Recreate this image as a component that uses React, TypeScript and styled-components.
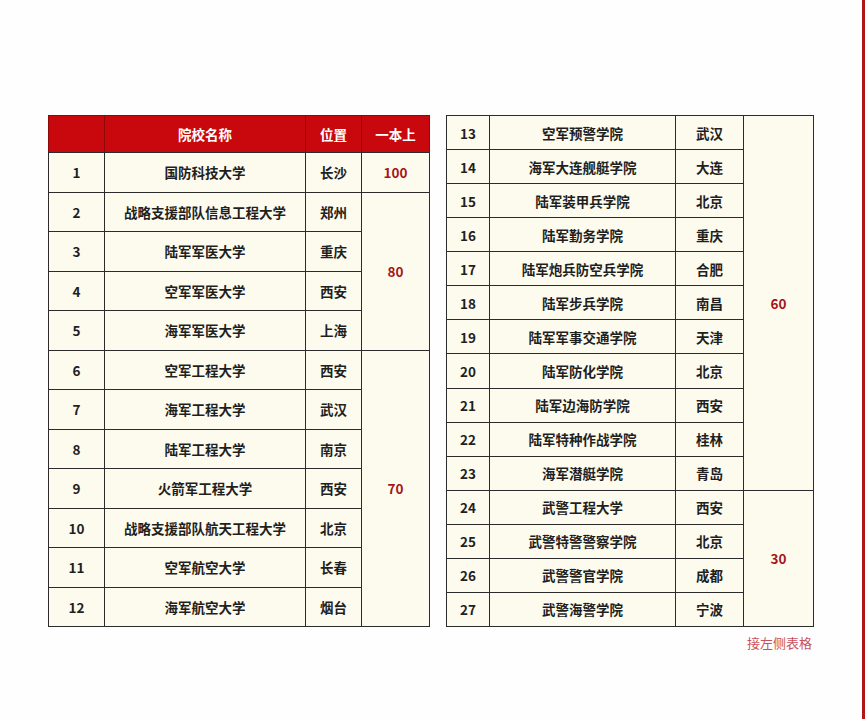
import React from "react";
import styled, { createGlobalStyle } from "styled-components";

const GlobalStyle = createGlobalStyle`
  html, body { margin: 0; padding: 0; background: #fefefe; }
  body { font-family: "Noto Sans CJK SC", "Noto Sans", sans-serif; }
`;

const Page = styled.div`
  width: 865px;
  height: 719px;
  box-sizing: border-box;
  border-right: 3px solid #b3141c;
  padding: 115px 0 0 48px;
  display: flex;
  gap: 16px;
  align-items: flex-start;
`;

const Column = styled.div`
  display: flex;
  flex-direction: column;
  align-items: flex-end;
`;

const Table = styled.table<{ $width: number }>`
  width: ${(p) => p.$width}px;
  border-collapse: collapse;
  table-layout: fixed;
  background: #fdfbee;
  border: 1.5px solid #2b2b2b;
  color: #1f1f1f;
  font-size: 13.5px;
  font-weight: 700;
  text-align: center;
`;

const Col = styled.col<{ $w: number }>`
  width: ${(p) => p.$w}px;
`;

const HeadRow = styled.tr`
  height: 37px;
  background: #c9080e;
`;

const HeadCell = styled.th`
  color: #ffffff;
  font-weight: 700;
  font-size: 13.5px;
  border: 1px solid #8c0a0a;
  border-bottom: 1px solid #2b2b2b;
  padding: 0;
`;

const Row = styled.tr<{ $h: number }>`
  height: ${(p) => p.$h}px;
`;

const Cell = styled.td`
  border: 1px solid #2b2b2b;
  padding: 0;
  white-space: nowrap;
`;

const Score = styled.td`
  border: 1px solid #2b2b2b;
  padding: 0;
  color: #a5141a;
  font-size: 13.5px;
`;

const Note = styled.div`
  margin-top: 6px;
  font-size: 13px;
  color: #c9505c;
  padding-right: 2px;
`;

type Item = [number, string, string];
type Group = { score: string; items: Item[] };

const leftGroups: Group[] = [
  { score: "100", items: [[1, "国防科技大学", "长沙"]] },
  {
    score: "80",
    items: [
      [2, "战略支援部队信息工程大学", "郑州"],
      [3, "陆军军医大学", "重庆"],
      [4, "空军军医大学", "西安"],
      [5, "海军军医大学", "上海"],
    ],
  },
  {
    score: "70",
    items: [
      [6, "空军工程大学", "西安"],
      [7, "海军工程大学", "武汉"],
      [8, "陆军工程大学", "南京"],
      [9, "火箭军工程大学", "西安"],
      [10, "战略支援部队航天工程大学", "北京"],
      [11, "空军航空大学", "长春"],
      [12, "海军航空大学", "烟台"],
    ],
  },
];

const rightGroups: Group[] = [
  {
    score: "60",
    items: [
      [13, "空军预警学院", "武汉"],
      [14, "海军大连舰艇学院", "大连"],
      [15, "陆军装甲兵学院", "北京"],
      [16, "陆军勤务学院", "重庆"],
      [17, "陆军炮兵防空兵学院", "合肥"],
      [18, "陆军步兵学院", "南昌"],
      [19, "陆军军事交通学院", "天津"],
      [20, "陆军防化学院", "北京"],
      [21, "陆军边海防学院", "西安"],
      [22, "陆军特种作战学院", "桂林"],
      [23, "海军潜艇学院", "青岛"],
    ],
  },
  {
    score: "30",
    items: [
      [24, "武警工程大学", "西安"],
      [25, "武警特警警察学院", "北京"],
      [26, "武警警官学院", "成都"],
      [27, "武警海警学院", "宁波"],
    ],
  },
];

function Body({ groups, rowH }: { groups: Group[]; rowH: number }) {
  return (
    <tbody>
      {groups.flatMap((g) =>
        g.items.map((it, i) => (
          <Row key={it[0]} $h={rowH}>
            <Cell>{it[0]}</Cell>
            <Cell>{it[1]}</Cell>
            <Cell>{it[2]}</Cell>
            {i === 0 && <Score rowSpan={g.items.length}>{g.score}</Score>}
          </Row>
        ))
      )}
    </tbody>
  );
}

export default function App() {
  return (
    <>
      <GlobalStyle />
      <Page>
        <Table $width={381}>
          <colgroup>
            <Col $w={56} />
            <Col $w={201} />
            <Col $w={56} />
            <Col $w={68} />
          </colgroup>
          <thead>
            <HeadRow>
              <HeadCell></HeadCell>
              <HeadCell>院校名称</HeadCell>
              <HeadCell>位置</HeadCell>
              <HeadCell>一本上</HeadCell>
            </HeadRow>
          </thead>
          <Body groups={leftGroups} rowH={39.5} />
        </Table>
        <Column>
          <Table $width={367}>
            <colgroup>
              <Col $w={43} />
              <Col $w={186} />
              <Col $w={68} />
              <Col $w={70} />
            </colgroup>
            <Body groups={rightGroups} rowH={34.07} />
          </Table>
          <Note>接左侧表格</Note>
        </Column>
      </Page>
    </>
  );
}
